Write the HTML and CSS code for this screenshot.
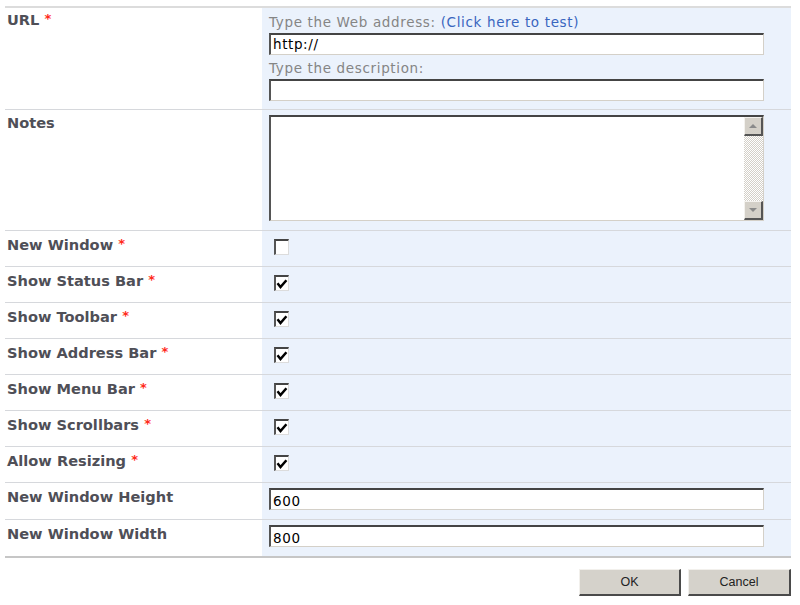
FILE: index.html
```html
<!DOCTYPE html>
<html>
<head>
<meta charset="utf-8">
<link rel="stylesheet" href="styles.css">
</head>
<body>
<div class="form">
  <div class="row row-url">
    <div class="label">URL <span class="req">*</span></div>
    <div class="value">
      <div class="desc">Type the Web address: <a class="link" href="#">(Click here to test)</a></div>
      <div class="input">http://</div>
      <div class="desc desc2">Type the description:</div>
      <div class="input"></div>
    </div>
  </div>
  <div class="row row-notes">
    <div class="label">Notes</div>
    <div class="value">
      <div class="notes">
        <div class="notes-area"></div>
        <div class="sb">
          <div class="sb-btn"><span class="tri tri-up"></span></div>
          <div class="sb-track"></div>
          <div class="sb-btn"><span class="tri tri-down"></span></div>
        </div>
      </div>
    </div>
  </div>
  <div class="row row-check">
    <div class="label">New Window <span class="req">*</span></div>
    <div class="value"><span class="cb"></span></div>
  </div>
  <div class="row row-check">
    <div class="label">Show Status Bar <span class="req">*</span></div>
    <div class="value"><span class="cb"><svg viewBox="0 0 12 12" width="12" height="12"><path d="M1.5 5.2 L4.5 9 L10.4 2.2" fill="none" stroke="#000" stroke-width="2.5"/></svg></span></div>
  </div>
  <div class="row row-check">
    <div class="label">Show Toolbar <span class="req">*</span></div>
    <div class="value"><span class="cb"><svg viewBox="0 0 12 12" width="12" height="12"><path d="M1.5 5.2 L4.5 9 L10.4 2.2" fill="none" stroke="#000" stroke-width="2.5"/></svg></span></div>
  </div>
  <div class="row row-check">
    <div class="label">Show Address Bar <span class="req">*</span></div>
    <div class="value"><span class="cb"><svg viewBox="0 0 12 12" width="12" height="12"><path d="M1.5 5.2 L4.5 9 L10.4 2.2" fill="none" stroke="#000" stroke-width="2.5"/></svg></span></div>
  </div>
  <div class="row row-check">
    <div class="label">Show Menu Bar <span class="req">*</span></div>
    <div class="value"><span class="cb"><svg viewBox="0 0 12 12" width="12" height="12"><path d="M1.5 5.2 L4.5 9 L10.4 2.2" fill="none" stroke="#000" stroke-width="2.5"/></svg></span></div>
  </div>
  <div class="row row-check">
    <div class="label">Show Scrollbars <span class="req">*</span></div>
    <div class="value"><span class="cb"><svg viewBox="0 0 12 12" width="12" height="12"><path d="M1.5 5.2 L4.5 9 L10.4 2.2" fill="none" stroke="#000" stroke-width="2.5"/></svg></span></div>
  </div>
  <div class="row row-check">
    <div class="label">Allow Resizing <span class="req">*</span></div>
    <div class="value"><span class="cb"><svg viewBox="0 0 12 12" width="12" height="12"><path d="M1.5 5.2 L4.5 9 L10.4 2.2" fill="none" stroke="#000" stroke-width="2.5"/></svg></span></div>
  </div>
  <div class="row row-num">
    <div class="label">New Window Height</div>
    <div class="value"><div class="input input-num">600</div></div>
  </div>
  <div class="row row-num row-last">
    <div class="label">New Window Width</div>
    <div class="value"><div class="input input-num">800</div></div>
  </div>
</div>
<div class="toolbar">
  <button class="btn">OK</button>
  <button class="btn">Cancel</button>
</div>
</body>
</html>
```
FILE: styles.css
```css
html, body {
  margin: 0;
  padding: 0;
  background: #ffffff;
}
body {
  font-family: "DejaVu Sans", Verdana, sans-serif;
}
.form {
  margin: 6px 0 0 5px;
  width: 786px;
  border-top: 2px solid #dcdcdc;
}
.row {
  display: grid;
  grid-template-columns: 257px 529px;
  border-bottom: 1px solid #d6d8dc;
}
.row-last {
  border-bottom: 2px solid #c6c6c6;
}
.label {
  padding: 4px 0 0 2px;
  font-size: 14.6px;
  line-height: 18px;
  font-weight: bold;
  color: #4f4f57;
  white-space: nowrap;
}
.req {
  color: #ff2a1a;
  font-size: 13px;
  vertical-align: 2px;
}
.value {
  background: #ebf2fc;
  padding-left: 7px;
}
.row-url .value {
  padding-top: 5px;
  padding-bottom: 8px;
}
.row-url .label {
  padding-top: 2px;
}
.desc {
  font-size: 13.5px;
  letter-spacing: 0.65px;
  line-height: 18px;
  color: #858585;
  margin-bottom: 2px;
}
.desc2 {
  margin-top: 4px;
}
.link {
  color: #3966bf;
  text-decoration: none;
}
.input {
  box-sizing: border-box;
  width: 495px;
  height: 22px;
  background: #ffffff;
  border-top: 2px solid #444444;
  border-left: 2px solid #555555;
  border-right: 1px solid #d4d0c8;
  border-bottom: 1px solid #d4d0c8;
  font-size: 13.5px;
  letter-spacing: 0.6px;
  line-height: 19px;
  padding-left: 2px;
  color: #000000;
}
.input-num {
  line-height: 22px;
}
.row-notes .value {
  padding-top: 5px;
  padding-bottom: 9px;
}
.notes {
  box-sizing: border-box;
  width: 495px;
  height: 106px;
  display: flex;
  background: #ffffff;
  border-top: 2px solid #444444;
  border-left: 2px solid #555555;
  border-right: 1px solid #d4d0c8;
  border-bottom: 1px solid #d4d0c8;
}
.notes-area {
  flex: 1;
}
.sb {
  width: 19px;
  display: flex;
  flex-direction: column;
}
.sb-btn {
  box-sizing: border-box;
  height: 19px;
  background: #d4d0c8;
  border-top: 1px solid #f4f2ee;
  border-left: 1px solid #f4f2ee;
  border-right: 2px solid #555555;
  border-bottom: 2px solid #555555;
  display: flex;
  align-items: center;
  justify-content: center;
}
.sb-track {
  flex: 1;
  background-color: #ffffff;
  background-image: repeating-conic-gradient(#d4d0c8 0 25%, #ffffff 0 50%);
  background-size: 2px 2px;
}
.tri {
  width: 0;
  height: 0;
  border-left: 4px solid transparent;
  border-right: 4px solid transparent;
}
.tri-up {
  border-bottom: 4px solid #8a8a8a;
}
.tri-down {
  border-top: 4px solid #8a8a8a;
}
.row-check .label {
  padding-top: 4px;
}
.row-check .value {
  height: 35px;
  box-sizing: border-box;
  padding: 8px 0 0 12px;
}
.cb {
  box-sizing: border-box;
  display: block;
  width: 15px;
  height: 16px;
  background: #ffffff;
  border-top: 2px solid #444444;
  border-left: 2px solid #555555;
  border-right: 1px solid #dcdcdc;
  border-bottom: 1px solid #dcdcdc;
}
.cb svg {
  display: block;
  margin-top: 1px;
}
.row-num .label {
  padding-top: 5px;
}
.row-num .value {
  height: 36px;
  box-sizing: border-box;
  padding-top: 5px;
}
.toolbar {
  width: 786px;
  margin: 11px 0 0 5px;
  display: flex;
  justify-content: flex-end;
  gap: 7px;
}
.btn {
  box-sizing: border-box;
  width: 102px;
  height: 27px;
  margin: 0;
  padding: 0;
  background: #d5d2cb;
  border-top: 1px solid #f2f0ec;
  border-left: 1px solid #f2f0ec;
  border-right: 2px solid #4a4a4a;
  border-bottom: 2px solid #4a4a4a;
  font-family: "Liberation Sans", Arial, sans-serif;
  font-size: 12.5px;
  color: #222222;
}
.btn + .btn {
  width: 103px;
}
```
